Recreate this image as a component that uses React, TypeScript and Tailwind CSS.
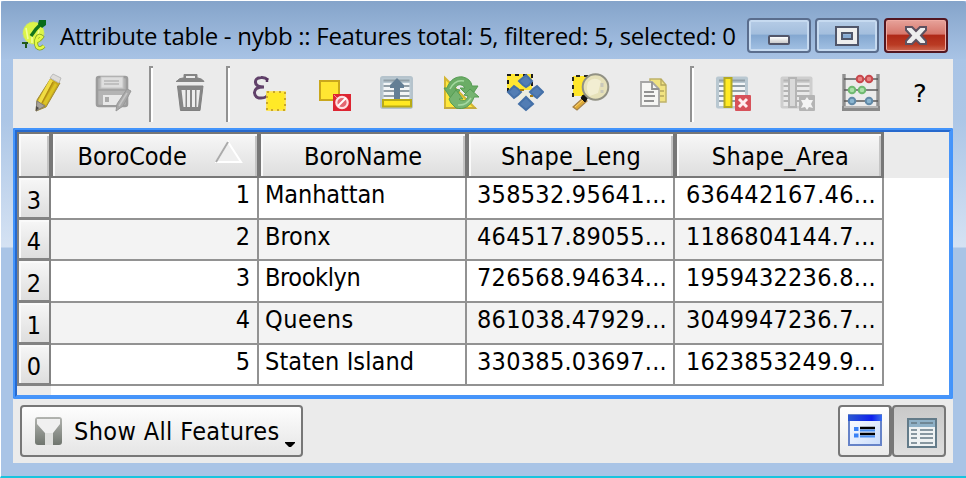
import type { ReactNode } from "react";

const uiFont = "font-['DejaVu_Sans_Condensed','DejaVu_Sans',sans-serif] [font-stretch:condensed]";

// Toolbar drawings share the window's coordinate space through their viewBox.
function Glyph({ x, y = 70, w = 40, h = 44, className = "", children }: { x: number; y?: number; w?: number; h?: number; className?: string; children: ReactNode }) {
  return (
    <svg width={w} height={h} viewBox={`${x} ${y} ${w} ${h}`} className={`block shrink-0 ${className}`}>
      {children}
    </svg>
  );
}

function Separator({ className }: { className: string }) {
  return <div className={`h-14 w-1 shrink-0 border-l-2 border-t-2 border-[#929292] bg-white ${className}`} />;
}

function Logo() {
  return (
    <Glyph x={20} y={18} w={28} h={34}>
      <ellipse cx="33.5" cy="33" rx="10.5" ry="11" fill="#dcf548" stroke="#c8e26a" strokeDasharray="2 1.5" />
      <path d="M22 43h6M26 42v6" stroke="#22591c" strokeWidth="2" />
      <path d="M26 28L28 39M32 36L32 43M39 30L37 40" stroke="#f2ff9b" strokeWidth="1.6" />
      <path d="M31 36L36 29L42 23" fill="none" stroke="#12741c" strokeWidth="3.4" />
      <path d="M39 20H46V25L42 28L38 24Z" fill="#086b18" />
      <path d="M35 42Q40 40 42 37Q39 34 37 38Q35 43 37 47Q40 50 44 46" fill="none" stroke="#7f9f22" strokeWidth="4" />
      <path d="M35 42Q40 40 42 37Q39 34 37 38Q35 43 37 47Q40 50 44 46" fill="none" stroke="#e5f944" strokeWidth="2.6" />
    </Glyph>
  );
}

function TableSheet({ x, muted = false }: { x: number; muted?: boolean }) {
  return (
    <g>
      <rect x={x} y="76.5" width="32" height="32" rx="2" fill={muted ? "#cecece" : "#b9c8d1"} />
      <rect x={x + 3} y="83" width="26" height="23" fill={muted ? "#e9e9e9" : "#f3f6f7"} />
      <path d={`M${x + 3} 80.5h26M${x + 3} 86h26M${x + 3} 91h26M${x + 3} 96h26M${x + 3} 101h26`} stroke={muted ? "#b4b4b4" : "#929fa7"} strokeWidth="1.8" />
    </g>
  );
}

function Toolbar() {
  return (
    <div className="flex h-[69px] shrink-0 items-start pt-[11px]">
      <Glyph x={28} className="ml-[15px]">
        <path d="M51 78L60 83L46 107L36 111L37 100Z" fill="#c8a91d" stroke="#a18c35" />
        <path d="M50 79L53 81L41 104L38 101Z" fill="#f0dc43" />
        <path d="M55 83L57 85L46 105L43 103Z" fill="#dcc424" />
        <path d="M53 82L42 103" stroke="#b28d13" strokeWidth="1.4" />
        <path d="M50 78L53 74L61 78L59 83Z" fill="#dedcda" stroke="#bbb" />
        <path d="M37 101L45 106L36 111Z" fill="#a7a29a" stroke="#817c76" />
        <path d="M36 106L39 108L36 111Z" fill="#4f4c48" />
      </Glyph>
      <Glyph x={93} className="ml-[25px]">
        <rect x="97" y="77" width="30" height="29" rx="2" fill="#b4b4b4" stroke="#9c9c9c" strokeWidth="2.6" />
        <rect x="101" y="77" width="22" height="11" fill="#dedede" stroke="#c7c7c7" />
        <path d="M104 81h15M104 84h15" stroke="#b6b6b6" strokeWidth="1.4" />
        <path d="M98 90h28" stroke="#a0a0a0" strokeWidth="1.5" />
        <rect x="103" y="95" width="19" height="10" fill="#e8e8e8" />
        <rect x="105" y="97" width="4" height="5" fill="#aaa" />
        <path d="M127 89L131 91L123 106L116 111L117 104Z" fill="#a9a9a9" stroke="#989898" />
        <path d="M127 93L119 106" stroke="#c4c4c4" strokeWidth="1.5" />
      </Glyph>
      <Separator className="ml-4 -mt-1" />
      <Glyph x={170} className="ml-[17px]">
        <path d="M184 78V74.5H197V78M177 81Q179 78 183 78H198Q203 79 204 81.5H176Z" fill="#858585" stroke="#858585" strokeWidth="1" />
        <path d="M186 77H195" stroke="#ececec" strokeWidth="2" />
        <path d="M177.500 86H203L200 110.500H180.500Z" fill="#868686" stroke="#808080" />
        <path d="M181.500 90H185.500V107H183.500ZM187 90H190V107H187ZM192 90H195V107H192ZM196.500 90H200L198 107H196.500Z" fill="#ededed" />
      </Glyph>
      <Separator className="ml-4 -mt-1" />
      <Glyph x={250} className="ml-5">
        <path d="M268 80Q265 77 261 77.500Q255 78 255.500 82.500Q256 87 264 87Q254 87 254.500 93Q255 98 261 98Q267 98 268 94" fill="none" stroke="#61416a" strokeWidth="3" />
        <path d="M267 78V82M268 91V95" stroke="#573460" strokeWidth="2.5" />
        <rect x="267" y="92" width="18" height="18" fill="#ffe927" stroke="#ffe44a" strokeWidth="1.7" />
        <rect x="267" y="92" width="18" height="18" fill="none" stroke="#c9a627" strokeWidth="2" strokeDasharray="2 4" />
      </Glyph>
      <Glyph x={315} className="ml-[25px]">
        <rect x="320" y="81" width="19" height="19" fill="#ffe632" stroke="#c9a71c" strokeWidth="2" />
        <rect x="333" y="94" width="18" height="17" fill="#dd2532" />
        <circle cx="342" cy="102.500" r="5.700" fill="#e46670" stroke="#ffdfe0" strokeWidth="2.200" />
        <path d="M338 106L346 98" stroke="#fff" strokeWidth="2" />
        <path d="M334 95l3 3" stroke="#f89296" />
      </Glyph>
      <Glyph x={377} className="ml-[22px]">
        <TableSheet x={380.5} />
        <rect x="381" y="77" width="31" height="31" rx="2" fill="none" stroke="#b5c3cc" strokeWidth="2" />
        <path d="M397 78L404 85V88H400V99H394V88H390V85Z" fill="#647f95" />
        <rect x="383" y="100" width="28" height="6.500" fill="#ffe922" stroke="#b8ab16" strokeWidth="2" />
      </Glyph>
      <Glyph x={441} className="ml-6">
        <path d="M445 78V108H475Z" fill="#ffe83c" stroke="#d4b633" strokeWidth="2" />
        <path d="M444 108H476" stroke="#c4aa40" strokeWidth="2" />
        <path d="M444 88H447C450 79 457 76 463 77Q471 79 472 86L478 86L470 98L460 88H465C462 83 456 84 455 89L460 90L452 100Z" fill="#6bad66" stroke="#569c53" />
        <path d="M479 97H474C471 107 463 110 456 108L451 103L449 99L456 90L463 99H459C462 102 467 101 468 96L464 95L470 89Z" fill="#76b471" stroke="#569c53" />
        <path d="M450 89Q455 79 464 81M471 98Q466 106 458 105" fill="none" stroke="#a5d9a0" strokeWidth="1.500" />
      </Glyph>
      <Glyph x={504} className="ml-[23px]">
        <rect x="507" y="74" width="25" height="18" fill="#ffe732" />
        <path d="M508 92V75H532V92H508" fill="none" stroke="#1b1b1b" strokeWidth="2" strokeDasharray="4 4" />
        <path d="M519 90H533L536 98L528 101H520L517 94Z" fill="#ededde" />
        <path d="M526 75L532 81L529 85L526 87L523 85L519 81ZM526 110L519 104L523 100L526 97L529 100L533 104ZM508 92L514 86L518 89L521 92L518 95L514 98ZM543 92L537 98L533 95L530 92L533 89L537 86Z" fill="#527db4" stroke="#4470a8" strokeWidth="2" />
        <path d="M520 90H524M530 96H533" stroke="#a67c12" strokeWidth="2" />
      </Glyph>
      <Glyph x={570} className="ml-[26px]">
        <rect x="573" y="76" width="18" height="20" fill="#ffe62b" />
        <path d="M573 97V76H591" fill="none" stroke="#292922" strokeWidth="2" strokeDasharray="4 4" />
        <path d="M583 98L587 101L577 110L573 107Z" fill="#ddaa38" stroke="#a5824b" strokeWidth="1.2" />
        <path d="M575 107L584 99" stroke="#ffd36d" />
        <path d="M583 95L588 97L585 102L581 98Z" fill="#111" stroke="#111" />
        <circle cx="595.5" cy="87" r="12.8" fill="#e6e1b9" stroke="#919184" strokeWidth="2" />
        <path d="M588 82Q594 76 601 81L598 93L590 96Q585 90 588 82" fill="#f7f4dd" opacity=".7" />
        <path d="M602 83V93" stroke="#c9c8bb" strokeWidth="3" strokeDasharray="4 3" />
      </Glyph>
      <Glyph x={636} className="ml-[26px]">
        <path d="M650 79H661L666 85V102H650Z" fill="#f1e381" stroke="#bfb26a" strokeWidth="1.5" />
        <path d="M661 79V85H666M660 91H664M660 96H664" fill="none" stroke="#b4a75c" strokeWidth="1.3" />
        <path d="M641 82H652L659 89V106H641Z" fill="#f6f6f4" stroke="#a6a6a6" strokeWidth="1.8" />
        <path d="M652 82V89H659M644 92H654M644 96H655M644 101H654" fill="none" stroke="#929292" strokeWidth="1.8" />
      </Glyph>
      <Separator className="ml-[14px] -mt-1" />
      <Glyph x={714} className="ml-5">
        <TableSheet x={716} />
        <rect x="724.5" y="78" width="7" height="29" fill="#ffea22" stroke="#b5aa22" strokeWidth="2" />
        <rect x="735" y="95" width="16" height="16" rx="1" fill="#d7525a" />
        <path d="M739 99L747 107M747 99L739 107" stroke="#fff0f0" strokeWidth="3" />
      </Glyph>
      <Glyph x={778} className="ml-6">
        <TableSheet x={780.5} muted />
        <rect x="789" y="78" width="7" height="29" fill="#d9d9d9" stroke="#b5b5b5" strokeWidth="2" />
        <rect x="799" y="95" width="16" height="16" rx="1" fill="#b4b4b4" />
        <path d="M807 97L809 100L813 100L811 104L813 108L809 107L807 110L805 107L801 108L803 104L801 100L805 100Z" fill="#f4f4f4" />
      </Glyph>
      <Glyph x={841} className="ml-[23px]">
        <path d="M844 74V109M878 74V109" stroke="#909090" strokeWidth="3.4" />
        <path d="M844 79H878M844 90H878M844 101H878" stroke="#5c5c5c" strokeWidth="1.7" />
        <rect x="842" y="106" width="38" height="5" fill="#8a8a8a" />
        <path d="M844 107H878" stroke="#b5b5b5" strokeWidth="2" />
        <g strokeWidth="2">
          <circle cx="860" cy="79" r="3.3" fill="#ea8283" stroke="#c7474c" />
          <circle cx="869" cy="79" r="3.3" fill="#ea8283" stroke="#c7474c" />
          <circle cx="852" cy="90" r="3.3" fill="#a9dfa6" stroke="#70b971" />
          <circle cx="862" cy="90" r="3.3" fill="#a9dfa6" stroke="#70b971" />
          <circle cx="852" cy="101" r="3.3" fill="#8ab5d0" stroke="#628aa8" />
          <circle cx="869" cy="101" r="3.3" fill="#8ab5d0" stroke="#628aa8" />
        </g>
      </Glyph>
      <div className={`ml-[32px] mt-[10px] origin-left scale-x-[1.15] text-[25px] leading-[28px] ${uiFont}`}>?</div>
    </div>
  );
}

function WindowButton({ close = false, className = "", children }: { close?: boolean; className?: string; children: ReactNode }) {
  const tone = close
    ? "border-[#531620] bg-[linear-gradient(#e7a39b_0%,#d6766b_46%,#ae2817_48%,#ba3b24_80%,#ce6952_100%)] shadow-[inset_0_0_0_1px_#efaaa1]"
    : "border-[#5a6d8d] bg-[linear-gradient(#b6cce6_0%,#a3bedd_46%,#83a7d0_48%,#a4c2e4_100%)] shadow-[inset_0_0_0_2px_#c6daf0]";
  return <div className={`flex h-[35px] w-16 shrink-0 items-center justify-center rounded-[4px] border-2 ${tone} ${className}`}>{children}</div>;
}

function HeaderCell({ className = "", children }: { className?: string; children?: ReactNode }) {
  return (
    <div className={`flex h-[46px] shrink-0 items-center justify-center border-y-2 border-[#777] bg-gradient-to-b from-[#f7f7f7] to-[#dedede] pt-[2px] shadow-[inset_2px_2px_0_#fafafa,inset_-2px_0_0_#c4c4c4] ${className}`}>
      {children}
    </div>
  );
}

const rows = [
  { id: "3", code: "1", name: "Manhattan", length: "358532.95641...", area: "636442167.46...", height: "h-[42px]", tracking: "tracking-[-0.1px]" },
  { id: "4", code: "2", name: "Bronx", length: "464517.89055...", area: "1186804144.7...", height: "h-[41px]", tracking: "" },
  { id: "2", code: "3", name: "Brooklyn", length: "726568.94634...", area: "1959432236.8...", height: "h-[42px]", tracking: "tracking-[-0.4px]" },
  { id: "1", code: "4", name: "Queens", length: "861038.47929...", area: "3049947236.7...", height: "h-[42px]", tracking: "tracking-[0.5px]" },
  { id: "0", code: "5", name: "Staten Island", length: "330385.03697...", area: "1623853249.9...", height: "h-[41px]", tracking: "tracking-[0.1px]" },
];

function DataTable() {
  return (
    <div className="flex h-[271px] w-[940px] shrink-0 flex-col rounded-[2px] border-4 border-b-[#4895f9] border-l-[#2769cd] border-r-[#4895f9] border-t-[#2769cd] bg-white outline-2 -outline-offset-2 outline-[#4394fb]">
      <div className="flex bg-[#ebebeb]">
        <HeaderCell className="w-9 border-l-2 border-r-4" />
        <HeaderCell className="w-[208px] border-r-4 pl-[10px]">
          <span className="w-[111px] whitespace-nowrap">BoroCode</span>
          <svg width="28" height="24" viewBox="0 0 28 24" className="ml-[26px] -mt-2 shrink-0">
            <path d="M1 22L13 2L26 22Z" fill="#efefef" stroke="#fff" strokeWidth="2" />
            <path d="M1 22L13 2" stroke="#aaa" strokeWidth="2" />
          </svg>
        </HeaderCell>
        <HeaderCell className="w-[208px] border-r-4">BoroName</HeaderCell>
        <HeaderCell className="w-[208px] border-r-4 tracking-[0.4px]">Shape_Leng</HeaderCell>
        <HeaderCell className="w-[207px] border-r-[3px] pl-[3px] tracking-[0.4px]">Shape_Area</HeaderCell>
      </div>
      {rows.map((row, index) => (
        <div key={row.id} className={`flex shrink-0 leading-[29px] ${row.height}`}>
          <div className="flex w-[34px] items-center justify-center border-b-[3px] border-l-2 border-r-2 border-[#838383] bg-gradient-to-b from-[#f7f7f7] to-[#dedede] pt-[5px] shadow-[inset_2px_2px_0_#fafafa]">{row.id}</div>
          <div className={`flex border-b-2 border-[#929292] ${index % 2 ? "bg-[#f3f3f3]" : "bg-white"}`}>
            <div className="w-[208px] border-r-2 border-[#929292] pr-[7px] pt-[2px] text-right">{row.code}</div>
            <div className={`w-[208px] border-r-2 border-[#929292] pl-[6px] pt-[2px] ${row.tracking}`}>{row.name}</div>
            <div className="flex w-[208px] justify-end border-r-2 border-[#929292] pr-[6px] pt-[2px] tracking-[0.27px]">{row.length}</div>
            <div className="flex w-[209px] justify-end border-r-2 border-[#929292] pr-[6px] pt-[2px] tracking-[0.27px]">{row.area}</div>
          </div>
        </div>
      ))}
      <div className="w-[34px] grow bg-[#ebebeb]" />
    </div>
  );
}

function Footer() {
  return (
    <div className="flex grow items-start pl-[7px] pr-[7px] pt-[6px]">
      <div className="flex h-[52px] w-[283px] items-center rounded-[4px] border-2 border-[#777] bg-gradient-to-b from-[#fdfdfd] to-[#e5e5e5] pl-[12px]">
        <svg width="30" height="30" viewBox="34 415 30 30" className="shrink-0">
          <defs><linearGradient id="filter" x2="0" y2="1"><stop stopColor="#b2b4b0" /><stop offset="1" stopColor="#70766f" /></linearGradient></defs>
          <rect x="35" y="416" width="27" height="28" rx="3" fill="url(#filter)" />
          <path d="M37 418H60V423L53 432V444H45V432L37 423Z" fill="#f0f0f0" />
          <path d="M45 432H53V444H45Z" fill="#dedfdd" />
        </svg>
        <span className="ml-[10px] w-[206px] whitespace-nowrap pt-px tracking-[0.37px]">Show All Features</span>
        <svg width="12" height="8" viewBox="0 0 12 8" className="ml-1 mt-7 shrink-0"><path d="M1 1H11V2L7 6H5L1 2Z" fill="#000" /></svg>
      </div>
      <div className="grow" />
      <div className="flex h-[52px] w-[54px] items-center justify-center rounded-[4px] border-2 border-r-[3px] border-[#777] bg-gradient-to-b from-white to-[#ebebeb] pb-[3px]">
        <svg width="34" height="32" viewBox="0 0 34 32">
          <defs><linearGradient id="titleBlue"><stop stopColor="#2b59d0" /><stop offset=".7" stopColor="#0e20ed" /><stop offset="1" stopColor="#3a70ef" /></linearGradient><linearGradient id="panelBlue" x2="1" y2="1"><stop stopColor="#fff" /><stop offset="1" stopColor="#c9dcfb" /></linearGradient></defs>
          <rect x="1" y="1" width="32" height="30" fill="url(#panelBlue)" stroke="#6683c8" strokeWidth="2" />
          <rect x="0" y="1" width="34" height="6" fill="url(#titleBlue)" />
          <path d="M6 15H10.500M6 21.500H10.500" stroke="#3b82f6" strokeWidth="4" />
          <path d="M12 14H27M12 20H27" stroke="#000" strokeWidth="2.5" />
          <path d="M12 16.500H27M12 22.500H27" stroke="#4b90f2" strokeWidth="2" />
        </svg>
      </div>
      <div className="flex h-[52px] w-[54px] items-center justify-center rounded-[4px] border-2 border-[#777] bg-gradient-to-b from-[#c9c9c9] to-[#dedede] pl-[6px]">
        <svg width="30" height="30" viewBox="0 0 30 30" className="mt-1">
          <rect x="1" y="1" width="28" height="28" fill="#eef2f3" stroke="#637b89" strokeWidth="2" />
          <rect x="2" y="2" width="26" height="7" fill="#8fb1c7" />
          <path d="M4 5H10M13 5H26M4 12H10M13 12H26M4 16H10M13 16H26M4 20H10M13 20H26M4 25H10M13 25H26" stroke="#667985" strokeWidth="1.7" />
        </svg>
      </div>
    </div>
  );
}

export default function App() {
  return (
    <div className={`flex h-[478px] w-[966px] flex-col overflow-hidden border-b-2 border-l border-t border-b-[#19c4de] border-l-white border-t-white bg-[#a9c4e6] text-[25px] leading-[29px] text-black ${uiFont}`}>
      <div className="flex h-[58px] shrink-0 items-start rounded-t-[3px] bg-gradient-to-b from-[#85a4ca] to-[#a8c3e5] pl-[19px] pt-[17px]">
        <Logo />
        <div className="ml-[12px] w-[687px] whitespace-nowrap pt-px font-['Open_Sans','Noto_Sans',sans-serif] text-[24px] leading-[34px] tracking-[-0.27px] [font-stretch:normal]">Attribute table - nybb :: Features total: 5, filtered: 5, selected: 0</div>
        <WindowButton><div className="mt-[9px] h-[10px] w-[22px] rounded-[2px] border-2 border-[#53576a] bg-gradient-to-b from-white to-[#ccc]" /></WindowButton>
        <WindowButton className="ml-[4px]"><svg width="24" height="20" viewBox="0 0 24 20"><path fillRule="evenodd" d="M1 1H23V19H1ZM7 7V13H17V7Z" fill="#eee" stroke="#50566a" strokeWidth="2" /></svg></WindowButton>
        <WindowButton close className="ml-[5px]"><svg width="24" height="20" viewBox="0 0 24 20"><path d="M2 1H8L12 5L16 1H22V4L17 9.5L22 15V18H16L12 14L8 18H2V15L7 9.5L2 4Z" fill="#eee" stroke="#5d5160" strokeWidth="2" /></svg></WindowButton>
      </div>
      <div className="flex h-[404px] shrink-0 bg-[linear-gradient(#a9c4e6_0,#acc6e6_60px,#d5e2f3_188px,#a9c4e6_189px)] pl-3">
        <div className="flex h-[404px] w-[940px] flex-col bg-[#ebebeb]">
          <Toolbar />
          <DataTable />
          <Footer />
        </div>
      </div>
    </div>
  );
}
